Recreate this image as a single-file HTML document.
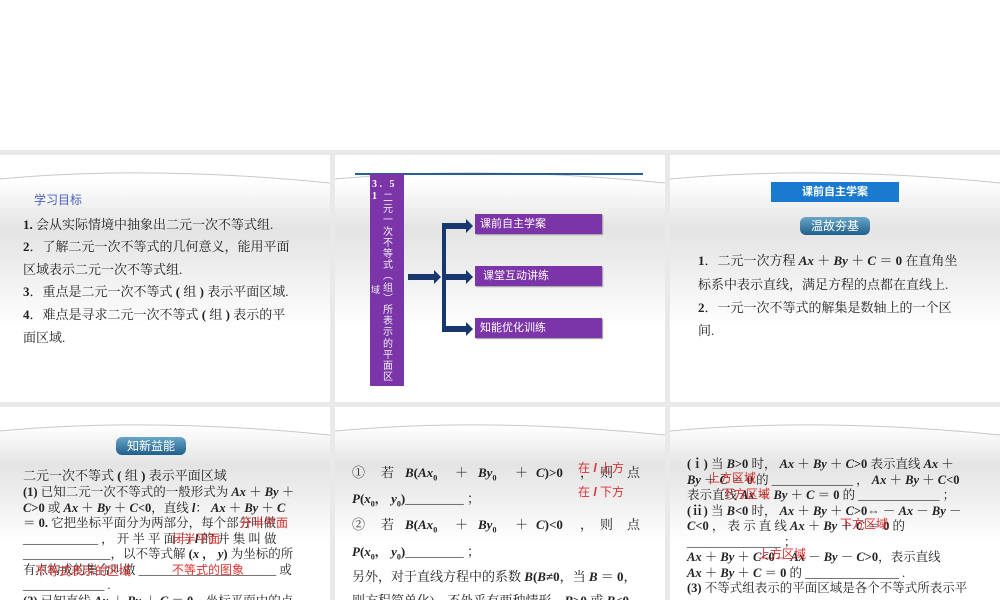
<!DOCTYPE html>
<html><head><meta charset="utf-8"><style>
*{margin:0;padding:0;box-sizing:border-box}
html,body{width:1000px;height:600px;overflow:hidden}
body{background:#fff;position:relative;font-family:"Liberation Serif","Noto Serif CJK SC",serif;color:#222}
.band{position:absolute;left:0;top:150px;width:1000px;height:450px;background:#e9e9e9}
.s{position:absolute;width:330px;height:247px;overflow:hidden;background:linear-gradient(#fff 0%,#fff 10%,#e4e4e4 30%,#ededed 45%,#fff 70%,#fff 100%)}
.sw{position:absolute;left:0;top:0;width:330px;height:40px}
.t{position:absolute;font-size:13px;line-height:22.5px;white-space:nowrap}
.r{color:#d33;font-family:"Liberation Sans","Noto Sans CJK SC",sans-serif}
.pb{position:absolute;background:#7b35a8;color:#fff;font-family:"Liberation Sans","Noto Sans CJK SC",sans-serif;font-size:11px;padding-left:5px;line-height:20px;width:127px;height:20px;box-shadow:1px 1px 1px #999}
.pill{position:absolute;border-radius:6px;background:linear-gradient(#6aa6c8,#1f5f8a);color:#fff;font-family:"Liberation Sans","Noto Sans CJK SC",sans-serif;font-size:12px;text-align:center;line-height:18px;height:18px}
b i,i b{font-weight:bold;font-style:italic}
sub{font-size:8px}
</style></head><body>
<div class="band"></div>

<!-- slide 1 -->
<div class="s" style="left:0;top:155px">
<svg class="sw" viewBox="0 0 330 40" preserveAspectRatio="none"><path d="M0 24 Q150 10 330 28 L330 0 L0 0Z" fill="#fff"/><path d="M0 24 Q150 10 330 28" stroke="#c8c8c8" fill="none"/></svg>
<div class="t" style="left:34px;top:34px;color:#4a60c0;font-family:'Liberation Sans','Noto Sans CJK SC',sans-serif;font-size:12px">学习目标</div>
<div class="t" style="left:23px;top:59px"><b>1.</b> 会从实际情境中抽象出二元一次不等式组.</div>
<div class="t" style="left:23px;top:81px"><b>2</b>．了解二元一次不等式的几何意义，能用平面</div>
<div class="t" style="left:23px;top:104px">区域表示二元一次不等式组.</div>
<div class="t" style="left:23px;top:126px"><b>3</b>．重点是二元一次不等式 <b>(</b> 组 <b>)</b> 表示平面区域.</div>
<div class="t" style="left:23px;top:149px"><b>4</b>．难点是寻求二元一次不等式 <b>(</b> 组 <b>)</b> 表示的平</div>
<div class="t" style="left:23px;top:172px">面区域.</div>
</div>

<!-- slide 2 -->
<div class="s" style="left:335px;top:155px">
<svg class="sw" viewBox="0 0 330 40" preserveAspectRatio="none"><path d="M0 24 Q150 10 330 28 L330 0 L0 0Z" fill="#fff"/><path d="M0 24 Q150 10 330 28" stroke="#c8c8c8" fill="none"/></svg>
<div style="position:absolute;left:20px;top:18px;width:288px;height:1.5px;background:#2a5f95"></div>
<div style="position:absolute;left:35px;top:19px;width:34px;height:212px;background:#7b35a8"></div>
<div style="position:absolute;left:37px;top:24px;color:#fff;font-size:10px;font-weight:bold;line-height:12px">3 .&nbsp;&nbsp;&nbsp;5<br>1</div>
<div style="position:absolute;left:47px;top:36px;width:12px;text-align:center;color:#eee;font-family:'Noto Sans CJK SC',sans-serif;font-size:10px;line-height:11.2px">二<br>元<br>一<br>次<br>不<br>等<br>式<br>︵<br>组<br>︶<br>所<br>表<br>示<br>的<br>平<br>面<br>区</div>
<div style="position:absolute;left:36px;top:128px;color:#eee;font-family:'Noto Sans CJK SC',sans-serif;font-size:9px">域</div>
<svg style="position:absolute;left:70px;top:60px" width="70" height="125"><g fill="#17376e"><rect x="3" y="59" width="26" height="6"/><polygon points="29,55 36,62 29,69"/><rect x="37" y="10" width="4" height="107"/><rect x="37" y="8" width="24" height="6"/><polygon points="61,4 68,11 61,18"/><rect x="41" y="59" width="20" height="6"/><polygon points="61,55 68,62 61,69"/><rect x="37" y="111" width="24" height="6"/><polygon points="61,107 68,114 61,121"/></g></svg>
<div class="pb" style="left:140px;top:59px">课前自主学案</div>
<div class="pb" style="left:140px;top:111px;padding-left:8px">课堂互动讲练</div>
<div class="pb" style="left:140px;top:163px">知能优化训练</div>
</div>

<!-- slide 3 -->
<div class="s" style="left:670px;top:155px">
<svg class="sw" viewBox="0 0 330 40" preserveAspectRatio="none"><path d="M0 24 Q150 10 330 28 L330 0 L0 0Z" fill="#fff"/><path d="M0 24 Q150 10 330 28" stroke="#c8c8c8" fill="none"/></svg>
<div style="position:absolute;left:101px;top:27px;width:128px;height:20px;background:#1a7ad0;color:#fff;font-family:'Liberation Sans','Noto Sans CJK SC',sans-serif;font-size:11px;font-weight:bold;text-align:center;line-height:20px">课前自主学案</div>
<div class="pill" style="left:130px;top:62px;width:70px">温故夯基</div>
<div class="t" style="left:28px;top:95px"><b>1</b>．二元一次方程 <b><i>Ax</i> ＋ <i>By</i> ＋ <i>C</i> ＝ 0</b> 在直角坐</div>
<div class="t" style="left:28px;top:119px">标系中表示直线，满足方程的点都在直线上.</div>
<div class="t" style="left:28px;top:142px"><b>2</b>．一元一次不等式的解集是数轴上的一个区</div>
<div class="t" style="left:28px;top:165px">间.</div>
</div>

<!-- slide 4 -->
<div class="s" style="left:0;top:407px;height:193px">
<svg class="sw" viewBox="0 0 330 40" preserveAspectRatio="none"><path d="M0 24 Q150 10 330 28 L330 0 L0 0Z" fill="#fff"/><path d="M0 24 Q150 10 330 28" stroke="#c8c8c8" fill="none"/></svg>
<div class="pill" style="left:116px;top:30px;width:70px">知新益能</div>
<div class="t" style="left:23px;top:61px;line-height:16px">二元一次不等式 <b>(</b> 组 <b>)</b> 表示平面区域</div>
<div class="t" style="left:23px;top:78px;line-height:15.5px;font-size:12.5px"><b>(1)</b> 已知二元一次不等式的一般形式为 <b><i>Ax</i> ＋ <i>By</i> ＋</b><br><b><i>C</i>&gt;0</b> 或 <b><i>Ax</i> ＋ <i>By</i> ＋ <i>C</i>&lt;0</b>，直线 <b><i>l</i></b>： <b><i>Ax</i> ＋ <i>By</i> ＋ <i>C</i></b><br><b>＝ 0.</b> 它把坐标平面分为两部分，每个部分叫做<br>____________ ， 开 半 平 面 与 <b><i>l</i></b> 的 并 集 叫 做<br>______________，以不等式解 <b>(<i>x</i> ， <i>y</i>)</b> 为坐标的所<br>有点构成的集合叫做 ______________________ 或<br>_____________ .<br><b>(2)</b> 已知直线 <b><i>Ax</i> ＋ <i>By</i> ＋ <i>C</i> ＝ 0</b>，坐标平面中的点</div>
<div class="t r" style="left:240px;top:109px;font-size:12px;line-height:14px">开半平面</div>
<div class="t r" style="left:172px;top:125px;font-size:12px;line-height:14px">闭半平面</div>
<div class="t r" style="left:35px;top:157px;font-size:12px;line-height:14px">不等式表示的区域</div>
<div class="t r" style="left:172px;top:156px;font-size:12px;line-height:14px">不等式的图象</div>
</div>

<!-- slide 5 -->
<div class="s" style="left:335px;top:407px;height:193px">
<svg class="sw" viewBox="0 0 330 40" preserveAspectRatio="none"><path d="M0 24 Q150 10 330 28 L330 0 L0 0Z" fill="#fff"/><path d="M0 24 Q150 10 330 28" stroke="#c8c8c8" fill="none"/></svg>
<div class="t" style="left:17px;top:55px">①</div><div class="t" style="left:46px;top:55px">若</div>
<div class="t" style="left:70px;top:55px"><b><i>B</i>(<i>Ax</i><sub>0</sub></b></div>
<div class="t" style="left:120px;top:55px">＋</div><div class="t" style="left:143px;top:55px"><b><i>By</i><sub>0</sub></b></div>
<div class="t" style="left:180px;top:55px">＋</div><div class="t" style="left:201px;top:55px"><b><i>C</i>)&gt;0</b></div>
<div class="t" style="left:245px;top:55px">，</div><div class="t" style="left:265px;top:55px">则</div><div class="t" style="left:292px;top:55px">点</div>
<div class="t" style="left:17px;top:81px"><b><i>P</i>(<i>x</i><sub>0</sub>， <i>y</i><sub>0</sub>)</b>_________ ；</div>
<div class="t" style="left:17px;top:107px">②</div><div class="t" style="left:46px;top:107px">若</div>
<div class="t" style="left:70px;top:107px"><b><i>B</i>(<i>Ax</i><sub>0</sub></b></div>
<div class="t" style="left:120px;top:107px">＋</div><div class="t" style="left:143px;top:107px"><b><i>By</i><sub>0</sub></b></div>
<div class="t" style="left:180px;top:107px">＋</div><div class="t" style="left:201px;top:107px"><b><i>C</i>)&lt;0</b></div>
<div class="t" style="left:245px;top:107px">，</div><div class="t" style="left:265px;top:107px">则</div><div class="t" style="left:292px;top:107px">点</div>
<div class="t" style="left:17px;top:134px"><b><i>P</i>(<i>x</i><sub>0</sub>， <i>y</i><sub>0</sub>)</b>_________ ；</div>
<div class="t" style="left:17px;top:159px">另外，对于直线方程中的系数 <b><i>B</i>(<i>B</i>≠0</b>，当 <b><i>B</i> ＝ 0</b>，</div>
<div class="t" style="left:17px;top:183px">则方程简单化)，不外乎有两种情形，<b><i>B</i>&gt;0</b> 或 <b><i>B</i>&lt;0</b>.</div>
<div class="t r" style="left:243px;top:50px;font-size:12px">在 <b><i>l</i></b> 上方</div>
<div class="t r" style="left:243px;top:74px;font-size:12px">在 <b><i>l</i></b> 下方</div>
</div>

<!-- slide 6 -->
<div class="s" style="left:670px;top:407px;height:193px">
<svg class="sw" viewBox="0 0 330 40" preserveAspectRatio="none"><path d="M0 24 Q150 10 330 28 L330 0 L0 0Z" fill="#fff"/><path d="M0 24 Q150 10 330 28" stroke="#c8c8c8" fill="none"/></svg>
<div class="t" style="left:17px;top:50px;line-height:15.5px;font-size:12.5px"><b>(ⅰ)</b> 当 <b><i>B</i>&gt;0</b> 时， <b><i>Ax</i> ＋ <i>By</i> ＋ <i>C</i>&gt;0</b> 表示直线 <b><i>Ax</i> ＋</b><br><b><i>By</i> ＋ <i>C</i> ＝ 0</b> 的 _____________ ， <b><i>Ax</i> ＋ <i>By</i> ＋ <i>C</i>&lt;0</b><br>表示直线 <b><i>Ax</i> ＋ <i>By</i> ＋ <i>C</i> ＝ 0</b> 的 _____________ ；<br><b>(ⅱ)</b> 当 <b><i>B</i>&lt;0</b> 时， <b><i>Ax</i> ＋ <i>By</i> ＋ <i>C</i>&gt;0⇔ － <i>Ax</i> － <i>By</i> －</b><br><b><i>C</i>&lt;0</b> ， 表 示 直 线 <b><i>Ax</i> ＋ <i>By</i> ＋ <i>C</i> ＝ 0</b> 的<br>_______________ ；<br><b><i>Ax</i> ＋ <i>By</i> ＋ <i>C</i>&lt;0⇔ <i>Ax</i> － <i>By</i> － <i>C</i>&gt;0</b>，表示直线<br><b><i>Ax</i> ＋ <i>By</i> ＋ <i>C</i> ＝ 0</b> 的 _______________ .<br><b>(3)</b> 不等式组表示的平面区域是各个不等式所表示平</div>
<div class="t r" style="left:38px;top:64px;font-size:12px;line-height:14px">上方区域</div>
<div class="t r" style="left:52px;top:80px;font-size:12px;line-height:14px">下方区域</div>
<div class="t r" style="left:170px;top:110px;font-size:12px;line-height:14px">下方区域</div>
<div class="t r" style="left:88px;top:140px;font-size:12px;line-height:14px">上方区域</div>
</div>
</body></html>
